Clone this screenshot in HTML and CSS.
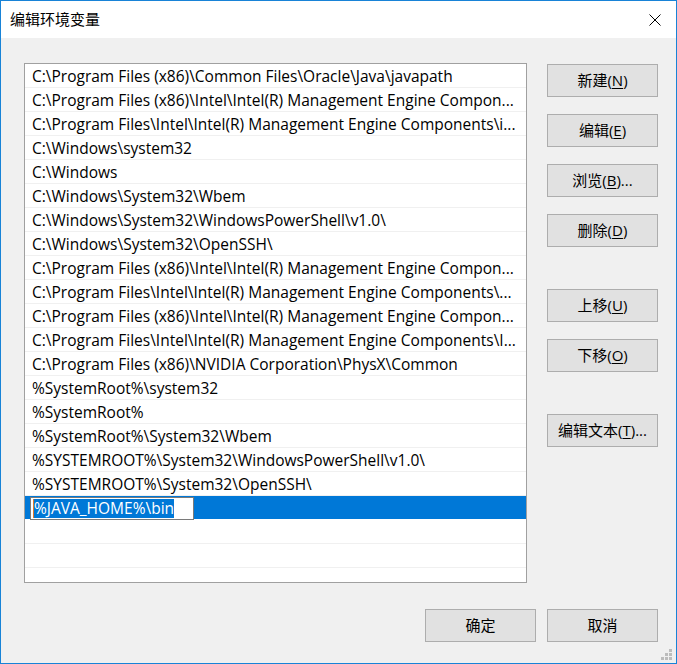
FILE: index.html
```html
<!DOCTYPE html>
<html lang="zh-CN">
<head>
<meta charset="utf-8">
<title>编辑环境变量</title>
<link rel="stylesheet" href="styles.css">
</head>
<body>
<div class="window">
  <div class="titlebar">
    <span class="title">编辑环境变量</span>
    <svg class="close" width="12" height="12" viewBox="0 0 12 12"><path d="M0.5 0.5 L11.5 11.5 M11.5 0.5 L0.5 11.5" stroke="#000" stroke-width="1" fill="none"/></svg>
  </div>
  <div class="content">
    <div class="main">
      <div class="list">
        <div class="row">C:\Program Files (x86)\Common Files\Oracle\Java\javapath</div>
        <div class="row">C:\Program Files (x86)\Intel\Intel(R) Management Engine Compon...</div>
        <div class="row">C:\Program Files\Intel\Intel(R) Management Engine Components\i...</div>
        <div class="row">C:\Windows\system32</div>
        <div class="row">C:\Windows</div>
        <div class="row">C:\Windows\System32\Wbem</div>
        <div class="row">C:\Windows\System32\WindowsPowerShell\v1.0\</div>
        <div class="row">C:\Windows\System32\OpenSSH\</div>
        <div class="row">C:\Program Files (x86)\Intel\Intel(R) Management Engine Compon...</div>
        <div class="row">C:\Program Files\Intel\Intel(R) Management Engine Components\...</div>
        <div class="row">C:\Program Files (x86)\Intel\Intel(R) Management Engine Compon...</div>
        <div class="row">C:\Program Files\Intel\Intel(R) Management Engine Components\I...</div>
        <div class="row">C:\Program Files (x86)\NVIDIA Corporation\PhysX\Common</div>
        <div class="row">%SystemRoot%\system32</div>
        <div class="row">%SystemRoot%</div>
        <div class="row">%SystemRoot%\System32\Wbem</div>
        <div class="row">%SYSTEMROOT%\System32\WindowsPowerShell\v1.0\</div>
        <div class="row">%SYSTEMROOT%\System32\OpenSSH\</div>
        <div class="row selected"><span class="editbox"><span class="caret"></span><span class="sel">%JAVA_HOME%\bin</span></span></div>
        <div class="row"></div>
        <div class="row"></div>
      </div>
      <div class="side">
        <div class="group">
          <button class="btn">新建(<u>N</u>)</button>
          <button class="btn">编辑(<u>E</u>)</button>
          <button class="btn">浏览(<u>B</u>)...</button>
          <button class="btn">删除(<u>D</u>)</button>
        </div>
        <div class="group">
          <button class="btn">上移(<u>U</u>)</button>
          <button class="btn">下移(<u>O</u>)</button>
        </div>
        <div class="group">
          <button class="btn">编辑文本(<u>T</u>)...</button>
        </div>
      </div>
    </div>
    <div class="footer">
      <button class="btn">确定</button>
      <button class="btn">取消</button>
    </div>
    <svg class="grip" width="12" height="12" viewBox="0 0 12 12">
      <rect x="8" y="0" width="3" height="3" fill="#bcbcbc"/>
      <rect x="4" y="4" width="3" height="3" fill="#bcbcbc"/>
      <rect x="8" y="4" width="3" height="3" fill="#bcbcbc"/>
      <rect x="0" y="8" width="3" height="3" fill="#bcbcbc"/>
      <rect x="4" y="8" width="3" height="3" fill="#bcbcbc"/>
      <rect x="8" y="8" width="3" height="3" fill="#bcbcbc"/>
    </svg>
  </div>
</div>
</body>
</html>
```

FILE: styles.css
```css
* { box-sizing: border-box; }
html, body { margin: 0; padding: 0; }
body {
  width: 677px;
  height: 664px;
  overflow: hidden;
  font-family: "Open Sans", "Noto Sans CJK SC", sans-serif;
  background: #f0f0f0;
}
.window {
  width: 677px;
  height: 664px;
  border: 1px solid #1883d7;
  display: flex;
  flex-direction: column;
  background: #f0f0f0;
}
.titlebar {
  height: 37px;
  flex: none;
  background: #ffffff;
  display: flex;
  align-items: center;
  justify-content: space-between;
  padding: 0 15px 0 9px;
}
.title {
  font-family: "Noto Sans CJK SC", sans-serif;
  font-size: 15px;
  color: #000;
  line-height: 20px;
  margin-top: -1px;
}
.close { display: block; margin-top: 1px; }
.content {
  position: relative;
  flex: 1;
  padding: 25px 18px 0 23px;
}
.main {
  display: flex;
  gap: 20px;
}
.list {
  width: 503px;
  height: 520px;
  border: 1px solid #a0a0a0;
  background: #fff;
  overflow: hidden;
}
.row {
  height: 24px;
  border-bottom: 1px solid #f0f0f0;
  padding: 1px 4px 0 7px;
  font-size: 15.5px;
  line-height: 23px;
  color: #000;
  white-space: nowrap;
  overflow: hidden;
}
.row.selected {
  background: #0078d7;
  padding-left: 5px;
  padding-top: 1px;
  border-bottom-color: #fff;
  overflow: visible;
}
.editbox {
  display: flex;
  align-items: center;
  width: 164px;
  height: 23px;
  border: 1px solid #7a7a7a;
  background: #fff;
  padding-left: 2px;
}
.caret {
  width: 1px;
  height: 19px;
  background: #e0782a;
}
.sel {
  background: #0078d7;
  color: #fff;
  line-height: 19px;
  height: 19px;
}
.side {
  width: 111px;
  padding-top: 1px;
  display: flex;
  flex-direction: column;
  gap: 42px;
}
.group {
  display: flex;
  flex-direction: column;
  gap: 17px;
}
.btn {
  width: 111px;
  height: 33px;
  margin: 0;
  padding: 0 0 2px 0;
  border: 1px solid #adadad;
  background: #e1e1e1;
  font-family: "Open Sans", "Noto Sans CJK SC", sans-serif;
  font-size: 15px;
  color: #000;
  line-height: 20px;
}
.btn u { text-underline-offset: 2px; }
.footer {
  display: flex;
  justify-content: flex-end;
  gap: 11px;
  margin-top: 26px;
}
.grip {
  position: absolute;
  right: 3px;
  bottom: 2px;
}
```
